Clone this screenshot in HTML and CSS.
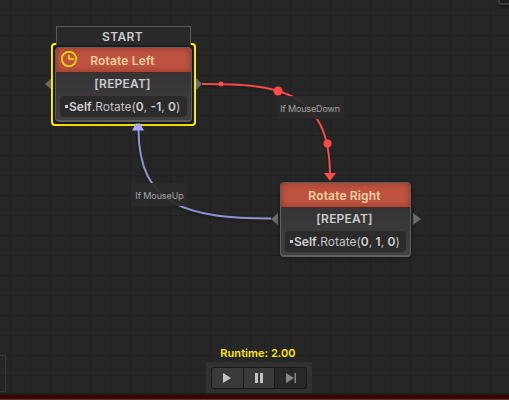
FILE: index.html
```html
<!DOCTYPE html>
<html lang="en">
<head>
<meta charset="utf-8">
<title>State graph</title>
<link rel="stylesheet" href="styles.css">
</head>
<body>
<main class="canvas">
  <svg class="wires" width="509" height="400" viewBox="0 0 509 400">
    <g class="wire-shadow">
      <path d="M202 86C275 86 330 90 330 178"/>
      <path d="M271 221C190 220 138 210 138 131"/>
    </g>
    <path class="wire wire-red" d="M202 84C275 84 330 88 330 176"/>
    <path class="wire wire-blue" d="M271 218.500C190 218 138.500 208 138.500 129"/>
    <g class="red-fill">
      <circle cx="221" cy="84" r="2.500"/>
      <circle cx="278" cy="91" r="4.500"/>
      <circle cx="327.500" cy="143.500" r="4"/>
      <path d="M324 173h12l-6 8z"/>
    </g>
    <g class="port">
      <path d="M52 78v12l-7-6z"/>
      <path d="M196 78v12l6-6z"/>
      <path d="M278 213v12l-7-6z"/>
      <path d="M413 213v12l8-6z"/>
    </g>
  </svg>

  <div class="wire-label label-down">If MouseDown</div>
  <div class="wire-label label-up">If MouseUp</div>

  <section class="node node-left">
    <div class="start">START</div>
    <div class="selection">
      <div class="card">
        <header class="title">
          <svg class="clock" width="16" height="16" viewBox="0 0 16 16"><circle cx="8" cy="8" r="7.200"/><path d="M8 3.800v4.200h5"/></svg>
          <span>Rotate Left</span>
        </header>
        <div class="mode">[REPEAT]</div>
        <div class="action"><i class="bullet"></i><b>Self</b>.Rotate(<b>0</b>, <b>-1</b>, <b>0</b>)</div>
      </div>
    </div>
  </section>

  <section class="node node-right">
    <div class="card">
      <header class="title"><span>Rotate Right</span></header>
      <div class="mode">[REPEAT]</div>
      <div class="action"><i class="bullet"></i><b>Self</b>.Rotate(<b>0</b>, <b>1</b>, <b>0</b>)</div>
    </div>
  </section>

  <svg class="arrow-up" width="12" height="8" viewBox="0 0 12 8"><path d="M0 7.500h12L8 .5H4z"/></svg>
  <div class="side-panel"></div>
  <div class="corner-panel"></div>

  <footer class="dock">
    <div class="runtime">Runtime: 2.00</div>
    <div class="toolbar">
      <div class="buttons">
        <button class="btn"><svg width="10" height="12" viewBox="0 0 10 12"><path d="M1 1v10l8-5z"/></svg></button>
        <button class="btn"><svg width="10" height="12" viewBox="0 0 10 12"><path d="M1 1h3v10H1zM6 1h3v10H6z"/></svg></button>
        <button class="btn btn-dim"><svg width="12" height="12" viewBox="0 0 12 12"><path d="M1 1v10l8-5zM9.500 1h1.500v10H9.500z"/></svg></button>
      </div>
    </div>
    <div class="status-line"></div>
  </footer>
</main>
</body>
</html>
```

FILE: styles.css
```css
* { box-sizing: border-box; }
body { margin: 0; background: #262626; font-family: Inter, "Liberation Sans", sans-serif; }
.canvas {
  position: relative;
  display: flex;
  flex-direction: column;
  justify-content: flex-end;
  width: 509px;
  height: 400px;
  overflow: hidden;
  background-color: #262626;
  background-image:
    linear-gradient(to right, #212121 1px, transparent 1px),
    linear-gradient(to bottom, #212121 1px, transparent 1px);
  background-size: 20px 20px;
  background-position: 10px 15px;
}
.wires { position: absolute; left: 0; top: 0; }
.wire, .wire-shadow path { fill: none; stroke-width: 2; }
.wire-shadow path { stroke: #000; stroke-opacity: .12; stroke-width: 5; }
.wire-red { stroke: #fa4a4a; }
.wire-blue { stroke: #9292d2; }
.red-fill { fill: #ff4b4b; }
.port { fill: #6b6b6b; }

.wire-label {
  position: absolute;
  height: 23px;
  line-height: 25px;
  text-align: center;
  white-space: nowrap;
  font-size: 9px;
  color: #a4a4a4;
  background: rgba(42, 42, 42, .92);
}
.label-down { left: 277px; top: 96px; width: 67px; letter-spacing: -.15px; padding-right: 1px; }
.label-up { left: 131px; top: 183px; width: 56px; letter-spacing: -.1px; padding-left: 1px; }

.node { position: absolute; }
.node-left { left: 51px; top: 26px; width: 145px; }
.node-right { left: 280px; top: 182px; width: 131px; }
.start {
  position: relative;
  z-index: 1;
  height: 19px;
  margin: 0 5px;
  padding-right: 2px;
  border: 1px solid #5a5a5a;
  border-bottom: 0;
  background: #292929;
  color: #ccc;
  text-align: center;
  font-size: 12px;
  line-height: 20px;
  font-weight: 600;
  letter-spacing: .35px;
}
.selection {
  height: 83px;
  margin-top: -2px;
  padding: 2px 2px;
  border: 2px solid #ffee12;
  border-radius: 4px;
  background: #202020;
}
.card {
  height: 75px;
  border: 1px solid #5f5f5f;
  border-bottom-width: 2px;
  border-radius: 4px;
  background: linear-gradient(#343434 33%, #404040);
  box-shadow: 0 1px 4px rgba(0, 0, 0, .45);
  overflow: hidden;
}
.selection .card { border-color: #5d5d5d; }
.title {
  position: relative;
  height: 25px;
  padding-right: 2px;
  border-bottom: 1px solid #51261f;
  background: #be5341;
  box-shadow: inset 0 0 7px rgba(110, 35, 25, .6);
  color: #f1cf9e;
  text-align: center;
  font-size: 12px;
  line-height: 25px;
  font-weight: 600;
  letter-spacing: .15px;
}
.clock { position: absolute; left: 5px; top: 3px; fill: none; stroke: #ffe500; stroke-width: 1.600; }
.mode {
  height: 23px;
  padding-right: 2px;
  color: #ccc;
  text-align: center;
  font-size: 12px;
  line-height: 21px;
  font-weight: 600;
  letter-spacing: .2px;
}
.action {
  height: 21px;
  margin: 0 4px;
  padding-left: 5px;
  border-radius: 4px;
  background: #2b2b2b;
  color: #c2c2c2;
  font-size: 12px;
  line-height: 22px;
  white-space: nowrap;
}
.action b { font-weight: 600; color: #d0d0d0; }
.bullet { display: inline-block; width: 3px; height: 3px; margin-right: 1px; vertical-align: 3px; background: #ccc; }
.arrow-up { position: absolute; left: 132px; top: 123px; fill: #aaaafa; }

.side-panel { position: absolute; left: -2px; top: 355px; width: 8px; height: 37px; border: 1px solid #383838; }
.corner-panel {
  position: absolute;
  left: 498px;
  top: -4px;
  width: 20px;
  height: 9px;
  border: 2px solid #3b3b3b;
  border-radius: 3px;
  background: #1e1e1e;
  box-shadow: 0 2px 3px #151515;
}
.dock { position: relative; display: flex; flex-direction: column; align-items: center; }
.runtime { font-size: 11px; line-height: 16px; font-weight: 600; color: #ffe811; margin-bottom: 1px; padding-left: 7px; letter-spacing: .05px; }
.toolbar { width: 106px; height: 31px; margin-left: 9px; padding: 5px; background: #313131; }
.buttons { display: flex; height: 22px; border: 1px solid #191919; border-radius: 3px; background: #191919; gap: 1px; overflow: hidden; }
.btn { flex: 1; display: flex; align-items: center; justify-content: center; padding: 0; border: 0; background: #3a3a3a; }
.btn svg { fill: #c4c4c4; }
.btn-dim { background: #282828; }
.btn-dim svg { fill: #888; }
.status-line { width: 509px; height: 7px; border-top: 2px solid #1c1c1c; border-bottom: 1px solid #494040; background: #400000; }
```
